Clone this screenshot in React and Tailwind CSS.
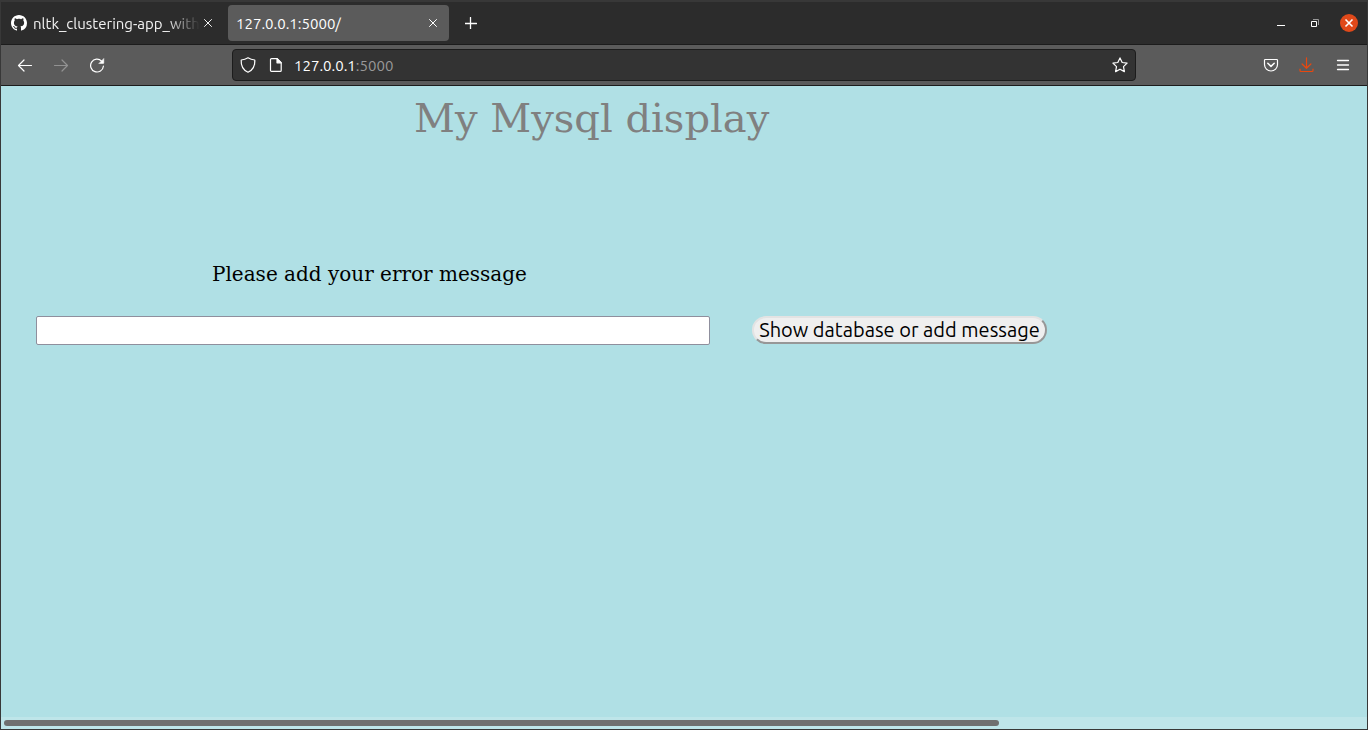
function GithubMark() {
  return (
    <svg viewBox="0 0 16 16" width="16" height="16" fill="currentColor" aria-hidden="true" className="mr-[6px] shrink-0 text-white">
      <path
        fillRule="evenodd"
        d="M8 0C3.58 0 0 3.58 0 8c0 3.54 2.29 6.53 5.47 7.59.4.07.55-.17.55-.38 0-.19-.01-.82-.01-1.49-2.01.37-2.53-.49-2.69-.94-.09-.23-.48-.94-.82-1.13-.28-.15-.68-.52-.01-.53.63-.01 1.08.58 1.23.82.72 1.21 1.87.87 2.33.66.07-.52.28-.87.51-1.07-1.78-.2-3.64-.89-3.64-3.95 0-.87.31-1.59.82-2.15-.08-.2-.36-1.02.08-2.12 0 0 .67-.21 2.2.82.64-.18 1.32-.27 2-.27s1.36.09 2 .27c1.53-1.04 2.2-.82 2.2-.82.44 1.1.16 1.92.08 2.12.51.56.82 1.27.82 2.15 0 3.07-1.87 3.75-3.65 3.95.29.25.54.73.54 1.48 0 1.07-.01 1.93-.01 2.2 0 .21.15.46.55.38A8.01 8.01 0 0 0 16 8c0-4.42-3.58-8-8-8z"
      />
    </svg>
  );
}

function Icon({ children, className = "" }) {
  return (
    <svg
      viewBox="0 0 16 16"
      width="16"
      height="16"
      fill="none"
      stroke="currentColor"
      strokeWidth="1.2"
      strokeLinecap="round"
      strokeLinejoin="round"
      aria-hidden="true"
      className={className}
    >
      {children}
    </svg>
  );
}

function CloseGlyph() {
  return (
    <svg viewBox="0 0 8 8" width="8" height="8" stroke="currentColor" strokeWidth="1" strokeLinecap="round" aria-hidden="true">
      <path d="M.5.5l7 7M7.5.5l-7 7" />
    </svg>
  );
}

function Tab({ active, icon, children }) {
  return (
    <div
      className={
        active
          ? "flex h-9 w-[221px] items-center rounded bg-[#5b5b5b] pr-2 pl-2 text-white"
          : "flex h-9 w-[219px] items-center rounded pr-2 pl-[6px] text-[#f2f2f2]"
      }
    >
      {icon}
      <span
        className={
          active
            ? "flex-1 overflow-hidden pt-[2px] whitespace-nowrap"
            : "flex-1 overflow-hidden pt-[2px] whitespace-nowrap mask-r-from-80%"
        }
      >
        {children}
      </span>
      <button aria-label="Close tab" className="flex h-6 w-4 items-center justify-center">
        <CloseGlyph />
      </button>
    </div>
  );
}

function ToolButton({ label, className = "", children }) {
  return (
    <button aria-label={label} className={"flex h-8 w-9 items-center justify-center " + className}>
      {children}
    </button>
  );
}

function TabBar() {
  return (
    <div className="flex h-[43px] items-center border-b border-[#1c1c1c] bg-[#2c2c2c] pr-px pl-1 text-[15px]">
      <Tab icon={<GithubMark />}>nltk_clustering-app_with_</Tab>
      <div className="w-1" />
      <Tab active>127.0.0.1:5000/</Tab>
      <button aria-label="New tab" className="ml-1 flex h-8 w-9 items-center justify-center text-white">
        <svg viewBox="0 0 12 12" width="12" height="12" stroke="currentColor" strokeWidth="1.3" strokeLinecap="round" aria-hidden="true">
          <path d="M5.5 .5v12M0 6.5h11.5" />
        </svg>
      </button>
      <div className="flex-1" />
      <button aria-label="Minimize" className="flex h-8 w-[34px] items-center justify-center text-white">
        <svg viewBox="0 0 8 8" width="8" height="8" aria-hidden="true">
          <path d="M0 6h8v1H0z" fill="currentColor" />
        </svg>
      </button>
      <button aria-label="Restore" className="flex h-8 w-[34px] items-center justify-center text-white">
        <svg viewBox="0 0 8 8" width="8" height="8" fill="none" aria-hidden="true">
          <path d="M.5 2.5h5v5h-5z" stroke="currentColor" />
          <path d="M2 .5h5.5V6" stroke="#999" />
        </svg>
      </button>
      <button aria-label="Close window" className="flex h-8 w-[34px] items-center justify-center text-white">
        <svg viewBox="0 0 18 18" width="18" height="18" aria-hidden="true">
          <circle cx="9" cy="9" r="9" fill="#e0491a" />
          <path d="M5.5 5.5l7 7M12.5 5.5l-7 7" stroke="currentColor" strokeWidth="1.6" />
        </svg>
      </button>
    </div>
  );
}

function ToolBar() {
  return (
    <div className="flex h-[41px] items-center border-b border-[#1c1c1c] bg-[#5b5b5b] px-[6px] text-white">
      <ToolButton label="Back">
        <Icon>
          <path d="M14.5 8.5h-13M7 3L1.5 8.5 7 14" />
        </Icon>
      </ToolButton>
      <ToolButton label="Forward" className="text-[#929292]">
        <Icon>
          <path d="M1.5 8.5h13M9 3l5.5 5.5L9 14" />
        </Icon>
      </ToolButton>
      <ToolButton label="Reload">
        <Icon>
          <path d="M14.4 9.2A6.4 6.4 0 1 1 12.6 4.1" />
          <path d="M14.8 1.8v4.3a.4.4 0 0 1-.4.4H10.1z" fill="currentColor" strokeWidth=".5" />
        </Icon>
      </ToolButton>
      <div className="mx-[117px] flex h-8 flex-1 items-center rounded border border-[#1c1c1c] bg-[#333333] pl-[7px] text-[15px]">
        <Icon className="mr-3 shrink-0">
          <path d="M8 .8c2 1.3 4.2 2 6.8 2.2.3 4.8-1.3 9.8-6.8 12.2C2.5 12.8.9 7.8 1.2 3 3.800 2.800 6 2.100 8 .8z" />
        </Icon>
        <Icon className="mr-[10px] shrink-0">
          <path d="M3.5 1.6h5.7l4 4v7.8a1 1 0 0 1-1 1H3.5a1 1 0 0 1-1-1V2.600a1 1 0 0 1 1-1z" />
          <path d="M9 1.6v4.2h4.2z" fill="currentColor" />
        </Icon>
        <span className="flex-1 pt-[2px]">
          127.0.0.1<span className="text-[#999999]">:5000</span>
        </span>
        <button aria-label="Bookmark this page" className="flex size-[30px] items-center justify-center">
          <Icon>
            <path d="M8 .9l2.2 4.6 4.9.6-3.6 3.5.9 5-4.4-2.4-4.4 2.4.9-5L.9 6.100l4.900-.6z" />
          </Icon>
        </button>
      </div>
      <ToolButton label="Save to Pocket">
        <Icon>
          <path d="M2.3 2.5h11.4a.8.8 0 0 1 .8.8V7.5a6.5 6.500 0 0 1-13 0V3.300a.8.8 0 0 1 .8-.8z" />
          <path d="M4.8 6.3L8 9.4l3.2-3.1" strokeWidth="1.5" />
        </Icon>
      </ToolButton>
      <ToolButton label="Downloads" className="text-[#e8480f]">
        <Icon>
          <path d="M7.5 .8v10.500M3.100 7l4.400 4.300L11.900 7M1 12v1.500a1 1 0 0 0 1 1h11a1 1 0 0 0 1-1V12" />
        </Icon>
      </ToolButton>
      <ToolButton label="Application menu">
        <Icon>
          <path d="M2.5 3.5h11M2.5 8h11M2.5 12.5h11" strokeWidth="1.3" />
        </Icon>
      </ToolButton>
    </div>
  );
}

export default function App() {
  return (
    <div className="flex min-h-screen flex-col border-x border-b border-t-2 border-[#383838] bg-[#b0e0e5] font-['Ubuntu','Noto_Sans',sans-serif]">
      <TabBar />
      <ToolBar />
      <main className="flex-1 px-[35px] pt-2 font-['DejaVu_Serif',serif] text-black">
        <h1 className="pl-[378px] text-[40px] leading-[48px] text-[#808080]">My Mysql display</h1>
        <form className="mt-[120px]" onSubmit={(event) => event.preventDefault()}>
          <label htmlFor="message" className="block pl-[176px] text-xl leading-6">
            Please add your error message
          </label>
          <div className="mt-[30px] flex items-start gap-[42px]">
            <input
              id="message"
              type="text"
              className="h-[29px] w-[674px] rounded-xs border border-[#8f8f9d] bg-white px-1 text-xl outline-none"
            />
            <button
              type="submit"
              className="flex h-7 w-[295px] items-center justify-center whitespace-nowrap rounded-[14px] border-2 border-[#e3e3e3] border-r-[#979797] border-b-[#979797] bg-[#efefef] font-['Ubuntu','Noto_Sans',sans-serif] text-xl"
            >
              Show database or add message
            </button>
          </div>
        </form>
      </main>
      <div className="flex h-3 items-center bg-[#bee5e9] pl-[3px]">
        <div className="h-[6px] w-[73%] rounded-full bg-[#6f6f6f]" />
      </div>
    </div>
  );
}
